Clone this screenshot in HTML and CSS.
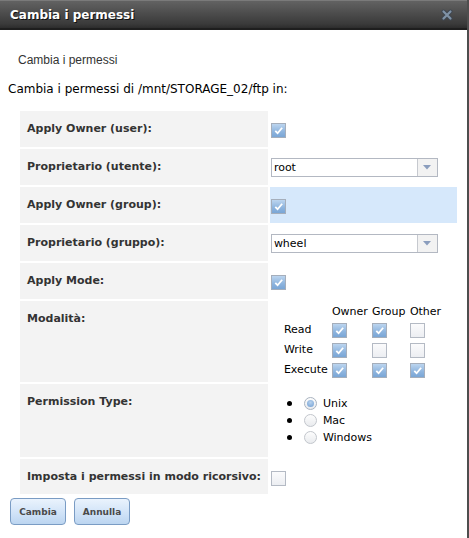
FILE: index.html
```html
<!DOCTYPE html>
<html lang="it">
<head>
<meta charset="utf-8">
<title>Cambia i permessi</title>
<link rel="stylesheet" href="styles.css">
</head>
<body>
<div class="dialog">
  <div class="titlebar">
    <span class="title">Cambia i permessi</span>
    <span class="close" title="Chiudi">
      <svg width="12" height="12" viewBox="0 0 12 12">
        <path d="M2.5 2.5 L9.5 9.5 M9.5 2.5 L2.5 9.5" stroke="#3e4650" stroke-width="4" stroke-linecap="round"/>
        <path d="M2.5 2.5 L9.5 9.5 M9.5 2.5 L2.5 9.5" stroke="#7f92a6" stroke-width="2.2" stroke-linecap="round"/>
      </svg>
    </span>
  </div>
  <div class="content">
    <div class="subhead">Cambia i permessi</div>
    <p class="intro">Cambia i permessi di /mnt/STORAGE_02/ftp in:</p>

    <table class="form">
      <tr>
        <td class="label">Apply Owner (user):</td>
        <td class="value"><span class="cb on"><svg viewBox="0 0 12 12"><path d="M2.5 6.5 L5 9 L10 3" fill="none" stroke="#fff" stroke-width="2"/></svg></span></td>
      </tr>
      <tr>
        <td class="label">Proprietario (utente):</td>
        <td class="value">
          <div class="select"><span class="sel-text">root</span><span class="sel-arrow"><svg width="8" height="5" viewBox="0 0 8 5"><path d="M0 0 H8 L4 4.5 Z" fill="#8a9dbd"/></svg></span></div>
        </td>
      </tr>
      <tr>
        <td class="label">Apply Owner (group):</td>
        <td class="value hilite"><span class="cb on"><svg viewBox="0 0 12 12"><path d="M2.5 6.5 L5 9 L10 3" fill="none" stroke="#fff" stroke-width="2"/></svg></span></td>
      </tr>
      <tr>
        <td class="label">Proprietario (gruppo):</td>
        <td class="value">
          <div class="select"><span class="sel-text">wheel</span><span class="sel-arrow"><svg width="8" height="5" viewBox="0 0 8 5"><path d="M0 0 H8 L4 4.5 Z" fill="#8a9dbd"/></svg></span></div>
        </td>
      </tr>
      <tr>
        <td class="label">Apply Mode:</td>
        <td class="value"><span class="cb on"><svg viewBox="0 0 12 12"><path d="M2.5 6.5 L5 9 L10 3" fill="none" stroke="#fff" stroke-width="2"/></svg></span></td>
      </tr>
      <tr class="tall-mode">
        <td class="label">Modalità:</td>
        <td class="value top">
          <div class="modes">
            <span></span><span class="hd">Owner</span><span class="hd">Group</span><span class="hd">Other</span>
            <span class="rl">Read</span>
            <span class="cb on"><svg viewBox="0 0 12 12"><path d="M2.5 6.5 L5 9 L10 3" fill="none" stroke="#fff" stroke-width="2"/></svg></span>
            <span class="cb on"><svg viewBox="0 0 12 12"><path d="M2.5 6.5 L5 9 L10 3" fill="none" stroke="#fff" stroke-width="2"/></svg></span>
            <span class="cb"></span>
            <span class="rl">Write</span>
            <span class="cb on"><svg viewBox="0 0 12 12"><path d="M2.5 6.5 L5 9 L10 3" fill="none" stroke="#fff" stroke-width="2"/></svg></span>
            <span class="cb"></span>
            <span class="cb"></span>
            <span class="rl">Execute</span>
            <span class="cb on"><svg viewBox="0 0 12 12"><path d="M2.5 6.5 L5 9 L10 3" fill="none" stroke="#fff" stroke-width="2"/></svg></span>
            <span class="cb on"><svg viewBox="0 0 12 12"><path d="M2.5 6.5 L5 9 L10 3" fill="none" stroke="#fff" stroke-width="2"/></svg></span>
            <span class="cb on"><svg viewBox="0 0 12 12"><path d="M2.5 6.5 L5 9 L10 3" fill="none" stroke="#fff" stroke-width="2"/></svg></span>
          </div>
        </td>
      </tr>
      <tr class="tall-type">
        <td class="label">Permission Type:</td>
        <td class="value top">
          <ul class="radios">
            <li><span class="dot"></span><span class="radio on"></span><span>Unix</span></li>
            <li><span class="dot"></span><span class="radio"></span><span>Mac</span></li>
            <li><span class="dot"></span><span class="radio"></span><span>Windows</span></li>
          </ul>
        </td>
      </tr>
      <tr class="last">
        <td class="label">Imposta i permessi in modo ricorsivo:</td>
        <td class="value"><span class="cb"></span></td>
      </tr>
    </table>

    <div class="actions">
      <button class="btn">Cambia</button>
      <button class="btn">Annulla</button>
    </div>
  </div>
</div>
</body>
</html>
```

FILE: styles.css
```css
html, body {
  margin: 0;
  padding: 0;
  background: #fff;
}

.dialog {
  width: 467px;
  height: 538px;
  border-right: 2px solid #4e4e4e;
  background: #fff;
  font-family: "DejaVu Sans", Verdana, sans-serif;
  color: #000;
}

/* window title bar */
.titlebar {
  height: 27px;
  border-top: 1px solid #7a7a7a;
  border-bottom: 2px solid #1e1e1e;
  background: linear-gradient(#626262, #3a3a3a 85%, #2c2c2c);
  display: flex;
  align-items: center;
  justify-content: space-between;
  padding: 0 14px 0 10px;
}
.title {
  color: #fff;
  font-weight: bold;
  font-size: 12px;
  text-shadow: 1px 1px 0 #111;
}
.close {
  display: flex;
  width: 12px;
  height: 12px;
  margin-top: 1px;
}

.content {
  padding-top: 23px;
}

.subhead {
  font-family: "Liberation Sans", Arial, sans-serif;
  font-size: 12px;
  line-height: 14px;
  color: #333;
  margin-left: 18px;
}
.intro {
  margin: 15px 0 0 8px;
  font-size: 12px;
  line-height: 14px;
}

/* settings table */
.form {
  margin: 13px 0 0 18px;
  width: 441px;
  border-spacing: 2px;
  border-collapse: separate;
}
.form tr { height: 36px; }
.form tr.tall-mode { height: 81px; }
.form tr.tall-type { height: 73px; }
.form tr.last { height: 35px; }

.label {
  width: 233px;
  background: #f3f3f3;
  padding: 11px 7px 0;
  vertical-align: top;
  font-weight: bold;
  font-size: 11px;
  line-height: 14px;
  color: #333;
  white-space: nowrap;
}
.value {
  padding: 0 0 0 1px;
  vertical-align: middle;
}
.value.top { vertical-align: top; }
.value.hilite { background: #d6e8fb; }

/* checkboxes */
.cb {
  display: inline-flex;
  box-sizing: border-box;
  width: 15px;
  height: 15px;
  border: 1px solid #b4bac4;
  background: linear-gradient(#fbfbfc, #eceef2);
  vertical-align: middle;
  align-items: center;
  justify-content: center;
}
.cb.on {
  border-color: #a5aebb;
  background: linear-gradient(#bcd5ef, #8db4de 60%, #7aa6d6);
}
.cb svg {
  width: 11px;
  height: 11px;
}
.value > .cb { margin-top: 1px; }

/* dropdowns */
.select {
  box-sizing: border-box;
  width: 167px;
  height: 19px;
  border: 1px solid #b3b8c2;
  display: flex;
  background: #fff;
}
.sel-text {
  flex: 1;
  padding-left: 2px;
  font-size: 11px;
  line-height: 17px;
  color: #000;
}
.sel-arrow {
  width: 19px;
  border-left: 1px solid #c6c9cf;
  background: #f2f2f2;
  display: flex;
  align-items: center;
  justify-content: center;
}

/* owner / group / other matrix */
.modes {
  display: grid;
  grid-template-columns: 48px 40px 38px auto;
  grid-template-rows: 15px 20px 20px 20px;
  align-items: center;
  padding: 4px 0 0 13px;
  font-size: 11px;
  line-height: 14px;
}
.modes .hd { align-self: start; }

/* permission type radios */
.radios {
  list-style: none;
  margin: 0;
  padding: 11px 0 0 16px;
  font-size: 11px;
  line-height: 17px;
}
.radios li {
  display: flex;
  align-items: center;
  height: 17px;
}
.dot {
  width: 5px;
  height: 5px;
  border-radius: 50%;
  background: #000;
  margin-right: 12px;
}
.radio {
  box-sizing: border-box;
  width: 13px;
  height: 13px;
  border-radius: 50%;
  border: 1px solid #c2c6cc;
  background: linear-gradient(#fdfdfd, #e9ebee);
  margin-right: 6px;
  display: flex;
  align-items: center;
  justify-content: center;
}
.radio.on { border-color: #a9b3c0; }
.radio.on::after {
  content: "";
  width: 7px;
  height: 7px;
  border-radius: 50%;
  background: radial-gradient(circle at 50% 35%, #b9d3ee, #6f9dd2);
}

/* action buttons */
.actions {
  display: flex;
  gap: 8px;
  margin: 2px 0 0 10px;
}
.btn {
  box-sizing: border-box;
  width: 56px;
  height: 27px;
  padding: 0;
  border: 1px solid #7a9cc4;
  border-radius: 4px;
  background: linear-gradient(#eaf3fd, #cfe2f7 60%, #bcd5f0);
  font-family: "DejaVu Sans", Verdana, sans-serif;
  font-weight: bold;
  font-size: 9px;
  color: #4a4a4a;
}
```
